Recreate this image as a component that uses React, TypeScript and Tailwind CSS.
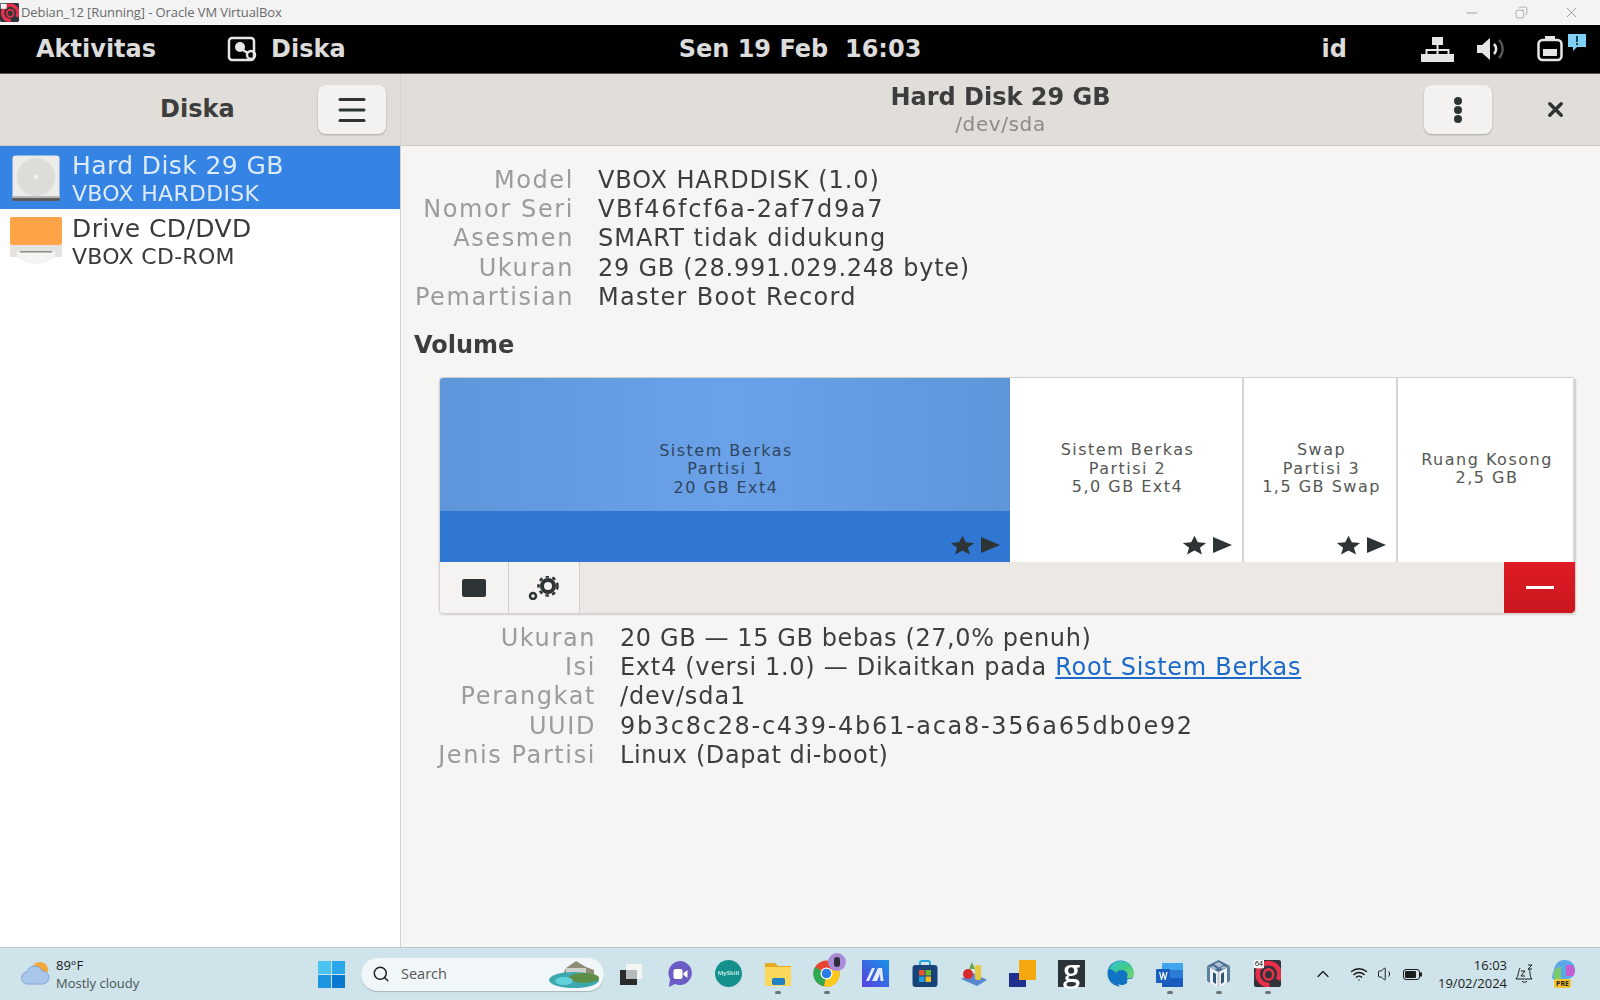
import { Search, ChevronUp, Wifi, Volume1, Minus, X, Copy, Menu } from "lucide-react";

const gnome = { fontFamily: '"DejaVu Sans", sans-serif' };
const win = { fontFamily: '"Open Sans", sans-serif' };

const Debian = ({ size = 26 }: { size?: number }) => (
  <svg width={size} height={size} viewBox="0 0 26 26">
    <rect width="26" height="26" rx="2" fill="#30343a" />
    <path d="M23 19a10.500 10.500 0 1 0-8 5" fill="none" stroke="#e8304a" strokeWidth="4.500" />
    <ellipse cx="14" cy="14" rx="4.500" ry="5" fill="none" stroke="#e8304a" strokeWidth="2.500" />
    <rect x="1" y="1" width="8" height="7" fill="#f3f3f3" />
  </svg>
);

const StarPlay = () => (
  <div className="absolute right-[10px] bottom-[7px] flex items-center gap-[6px]">
    <svg width="25" height="20" viewBox="0 0 24 18">
      <path d="M12 0l3.2 6.4 8 .6-6 4.6 2 6.4-7.2-3.8L4.800 18l2-6.400-6-4.600 8-.6z" fill="#2e3436" />
    </svg>
    <svg width="19" height="16" viewBox="0 0 19 16">
      <path d="M0 0l19 8L0 16z" fill="#2e3436" />
    </svg>
  </div>
);

const Partition = ({ w, lines, icons = true }: { w: string; lines: string[]; icons?: boolean }) => (
  <div className={`${w} relative flex items-center justify-center border-r-2 border-[#d8d5d2] bg-white pb-[2px] pl-[3px] text-center text-[16px] leading-[18.400px] tracking-[1.500px] whitespace-nowrap text-[#555753]`}>
    <div>
      {lines.map((l) => (
        <div key={l}>{l}</div>
      ))}
    </div>
    {icons && <StarPlay />}
  </div>
);

const Info = ({ rows, cols }: { rows: [string, React.ReactNode, string][]; cols: string }) => (
  <div className={`grid ${cols} gap-x-[24px] text-[24px] leading-[29.200px]`}>
    {rows.map(([k, v, track]) => (
      <div key={k} className="contents">
        <div className="text-right tracking-[1.600px] whitespace-nowrap text-[#9b9b98]">{k}</div>
        <div className={`whitespace-nowrap text-[#3d3d3a] ${track}`}>{v}</div>
      </div>
    ))}
  </div>
);

const TaskIcon = ({ dot, children }: { dot?: boolean; children: React.ReactNode }) => (
  <div className="relative flex h-full w-[49px] items-center justify-center pb-[1px]">
    {children}
    {dot && <div className="absolute bottom-[6px] h-[3px] w-[6px] rounded-full bg-[#6b7578]" />}
  </div>
);

const taskIcons = [
  <svg width="26" height="26" viewBox="0 0 26 26" key="tv">
    <rect x="2" y="9" width="17" height="15" fill="#2a2a2a" />
    <rect x="8" y="3" width="16" height="15" fill="#f4f6f6" />
    <rect x="8" y="9" width="11" height="9" fill="#b4b9ba" />
  </svg>,
  <svg width="26" height="30" viewBox="0 0 26 30" key="meet">
    <path d="M13 2a12 12 0 1 1-5 23l-6 3 1-8A12 12 0 0 1 13 2z" fill="#6a5cc4" />
    <rect x="6.500" y="10" width="9" height="10" rx="2" fill="#fff" />
    <path d="M16.500 14l4-3v8l-4-3z" fill="#fff" />
  </svg>,
  <div className="flex h-[27px] w-[27px] items-center justify-center rounded-full bg-[#15908c] text-[6px] font-bold text-[#bfe8e2]" key="ms">
    MySkill
  </div>,
  <svg width="28" height="26" viewBox="0 0 28 26" key="files">
    <path d="M1 2h10l3 3h13v19H1z" fill="#e6a91f" />
    <rect x="1" y="6" width="26" height="19" rx="1" fill="#fbd75c" />
    <rect x="8" y="17" width="13" height="7" rx="1.500" fill="#1f80c4" />
  </svg>,
  <div className="relative" key="chrome">
    <svg width="27" height="27" viewBox="0 0 27 27">
      <circle cx="13.500" cy="13.500" r="13" fill="#e5452f" />
      <path d="M13.500 13.500L2 7a13 13 0 0 0 9 19.300z" fill="#2fa84f" />
      <path d="M13.500 13.500l-2.500 13A13 13 0 0 0 26 9.500H13.500z" fill="#fbc91c" />
      <circle cx="13.500" cy="13.500" r="6" fill="#fff" />
      <circle cx="13.500" cy="13.500" r="4.800" fill="#2c7be5" />
    </svg>
    <div className="absolute -top-[7px] -right-[6px] flex h-[18px] w-[18px] items-center justify-center rounded-full bg-[#a98bd8]">
      <div className="h-[10px] w-[6px] rounded-sm bg-[#2e2e38]" />
    </div>
  </div>,
  <svg width="27" height="27" viewBox="0 0 27 27" key="m">
    <defs>
      <linearGradient id="mg" x1="0" y1="1" x2="1" y2="0">
        <stop offset="0" stopColor="#5b3fe0" />
        <stop offset="1" stopColor="#1593e6" />
      </linearGradient>
    </defs>
    <rect width="27" height="27" fill="url(#mg)" />
    <path d="M4 21l6-13h3L7 21zM10 21l6-13h4l1.500 13h-3l-.5-7-3 7z" fill="#e6ecfb" />
  </svg>,
  <svg width="26" height="28" viewBox="0 0 26 28" key="store">
    <path d="M8 6V3a2 2 0 0 1 2-2h6a2 2 0 0 1 2 2v3" fill="none" stroke="#29a5dd" strokeWidth="2" />
    <rect x="0.500" y="5" width="25" height="22" rx="3" fill="#16447a" />
    <rect x="7" y="10" width="5.500" height="5.500" fill="#e9542e" />
    <rect x="13.500" y="10" width="5.500" height="5.500" fill="#72b82e" />
    <rect x="7" y="16.500" width="5.500" height="5.500" fill="#1ea0e0" />
    <rect x="13.500" y="16.500" width="5.500" height="5.500" fill="#f8bc1c" />
  </svg>,
  <svg width="28" height="26" viewBox="0 0 28 26" key="geo">
    <path d="M1 18l12-6 14 7-10 6z" fill="#5a88cf" />
    <circle cx="8" cy="13" r="5" fill="#d92b2b" />
    <rect x="15" y="4" width="6" height="15" rx="2" fill="#e8c93c" />
    <path d="M9 8l3-7 3 7z" fill="#66a84a" />
  </svg>,
  <svg width="27" height="27" viewBox="0 0 27 27" key="sq">
    <rect x="0" y="13" width="17" height="14" fill="#20308f" />
    <rect x="10" y="0" width="17" height="20" fill="#f7a70f" />
  </svg>,
  <div className="flex h-[27px] w-[27px] items-center justify-center bg-[#2b3338] pb-[7px] text-[31px] leading-none font-semibold text-white" key="g" style={win}>
    g
  </div>,
  <svg width="27" height="27" viewBox="0 0 27 27" key="edge">
    <defs>
      <linearGradient id="eg" x1="0" y1="0" x2="1" y2="1">
        <stop offset="0" stopColor="#37c5cf" />
        <stop offset="0.500" stopColor="#3ec98f" />
        <stop offset="1" stopColor="#7fdc6a" />
      </linearGradient>
    </defs>
    <circle cx="13.500" cy="13.500" r="13" fill="#1272c4" />
    <path d="M2 9a13 13 0 0 1 25 5c0 4-4 5-8 4 2-1 2-3 1-5-2-4-9-4-11 0-2-3-5-4-7-4z" fill="url(#eg)" />
    <path d="M27 17c-1 6-6 10-11 10-3 0-4-1-5-3 3 2 7 1 9-1 1-1-1-3 1-4 2 0 4 0 6-2z" fill="#cfe3ea" />
  </svg>,
  <svg width="27" height="26" viewBox="0 0 27 26" key="word">
    <rect x="6" y="2" width="21" height="24" rx="1.500" fill="#2b7cd3" />
    <rect x="6" y="2" width="21" height="7" fill="#41a5ee" />
    <rect x="6" y="17" width="21" height="9" fill="#185abd" />
    <rect x="0" y="8" width="14" height="14" rx="1" fill="#1a5fc0" />
    <path d="M3 11l2 8h1l1.300-5 1.300 5h1l2-8h-1.300l-1.200 5.500L7.800 11H6.800l-1.300 5.500L4.300 11z" fill="#fff" />
  </svg>,
  <svg width="25" height="30" viewBox="0 0 25 30" key="vbox">
    <path d="M12.500 1L24 7v15l-11.500 7L1 22V7z" fill="#eef2f4" />
    <path d="M12.500 1L24 7l-11.500 6L1 7z" fill="#4b6f90" />
    <path d="M8 5l4.500-2 5 3-4.500 2.500zM4 8l3-1 4 2.500-3 1.500zM14 9l4-2 3 1-4 2z" fill="#a9c0d2" />
    <path d="M1 7v15l3 2V9zM24 7v15l-3 2V9z" fill="#5b7f9f" />
    <path d="M7 13l3 2v10l-3-2zM18 13l-3 2v10l3-2z" fill="#2f5678" />
    <path d="M11.500 13h2v15h-2z" fill="#bcc9d2" />
  </svg>,
  <div className="relative" key="deb">
    <Debian size={27} />
    <div className="absolute top-0 left-0 bg-[#f3f3f3] px-[1px] text-[7px] leading-[8px] text-black">64</div>
  </div>,
];

export default function App() {
  return (
    <div className="flex h-[1000px] w-[1600px] flex-col overflow-hidden bg-white">
      {/* host window title */}
      <div className="flex h-[25px] shrink-0 items-center bg-[#f3f3f3] text-[13px] tracking-[-0.100px] text-[#6a6a6a]" style={win}>
        <Debian size={19} />
        <span className="ml-[2px]">Debian_12 [Running] - Oracle VM VirtualBox</span>
        <div className="ml-auto flex items-center gap-[35px] pr-[20px] text-[#777]">
          <Minus size={16} strokeWidth={1} />
          <Copy size={13} strokeWidth={1} className="-scale-x-100" />
          <X size={17} strokeWidth={1} />
        </div>
      </div>

      <div className="flex min-h-0 flex-1 flex-col blur-[0.5px]" style={gnome}>
        {/* gnome top bar */}
        <div className="grid h-[49px] shrink-0 grid-cols-[1fr_auto_1fr] items-center border-b border-[#55534f] bg-black text-[24px] font-bold text-[#dcdcdc]">
          <div className="flex items-center pl-[36px]">
            <span>Aktivitas</span>
            <svg width="33" height="26" viewBox="0 0 33 26" className="ml-[71px] mr-[11px]">
              <rect x="2" y="2" width="25" height="22" rx="3" fill="none" stroke="#e6e6e6" strokeWidth="2.500" />
              <circle cx="13" cy="11" r="5" fill="#e6e6e6" />
              <circle cx="24" cy="19" r="4" fill="none" stroke="#e6e6e6" strokeWidth="2.500" />
              <path d="M14 13l7 4" stroke="#e6e6e6" strokeWidth="2.500" />
            </svg>
            <span>Diska</span>
          </div>
          <div className="whitespace-nowrap">Sen 19 Feb&nbsp;&nbsp;16:03</div>
          <div className="flex items-center justify-end pr-[14px]">
            <span>id</span>
            <svg width="33" height="25" viewBox="0 0 33 25" className="ml-[74px]" fill="#e6e6e6">
              <rect x="11" y="0" width="11" height="8" />
              <rect x="0" y="17" width="11" height="8" />
              <rect x="11" y="17" width="11" height="8" />
              <rect x="22" y="17" width="11" height="8" />
              <path d="M15.500 8h2v4h11v5h-2v-3h-9v3h-2v-3h-9v3h-2v-5h11z" />
            </svg>
            <svg width="33" height="24" viewBox="0 0 33 24" className="ml-[23px]">
              <path d="M0 8h5l8-7v22l-8-7H0z" fill="#e6e6e6" />
              <path d="M17 7a7 7 0 0 1 0 10" fill="none" stroke="#e6e6e6" strokeWidth="2.500" />
              <path d="M22 3a13 13 0 0 1 0 18" fill="none" stroke="#555" strokeWidth="2.500" />
            </svg>
            <svg width="26" height="26" viewBox="0 0 26 26" className="ml-[27px]">
              <rect x="8" y="0" width="10" height="4" fill="#e6e6e6" />
              <rect x="1.500" y="4" width="23" height="20" rx="4" fill="none" stroke="#e6e6e6" strokeWidth="2.500" />
              <rect x="6" y="13" width="14" height="7" fill="#e6e6e6" />
            </svg>
            <svg width="18" height="18" viewBox="0 0 18 18" className="mb-[12px] ml-[5px]">
              <path d="M0 0h18v13h-9l-4 4v-4H0z" fill="#7fd0f5" />
              <rect x="8" y="2" width="2" height="6" fill="#16445a" />
              <rect x="8" y="9" width="2" height="2" fill="#16445a" />
            </svg>
          </div>
        </div>

        <div className="flex min-h-0 flex-1">
          {/* sidebar */}
          <div className="flex w-[401px] shrink-0 flex-col border-r border-[#d5d2ce]">
            <div className="flex h-[72px] shrink-0 items-center justify-between border-b border-[#cdc9c4] bg-[#e1ded9] pr-[14px] pl-[160px]">
              <span className="-mt-[1px] text-[24px] font-bold text-[#3d3d3d]">Diska</span>
              <button className="flex h-[49px] w-[68px] items-center justify-center rounded-lg bg-[#f3f2f0] shadow-[0_1px_2px_rgba(0,0,0,0.25)]">
                <Menu size={36} strokeWidth={2} className="text-[#2e3436]" />
              </button>
            </div>
            <div className="flex h-[63px] items-center bg-[#3584e4] pl-[12px] text-[#dbeafc]">
              <svg width="48" height="46" viewBox="0 0 48 46">
                <rect x="0.500" y="0.500" width="47" height="45" rx="3" fill="#ecebe7" />
                <rect x="0" y="41" width="48" height="5" rx="2" fill="#5a5a58" />
                <rect x="0" y="41" width="48" height="2" fill="#b8b7b3" />
                <circle cx="24" cy="22" r="19" fill="#dddcd8" />
                <circle cx="24" cy="22" r="2" fill="#f2f2f0" />
              </svg>
              <div className="ml-[12px] whitespace-nowrap">
                <div className="text-[25px] leading-[31px] tracking-[0.400px]">Hard Disk 29 GB</div>
                <div className="text-[22px] leading-[25px] tracking-[0.300px]">VBOX HARDDISK</div>
              </div>
            </div>
            <div className="flex h-[63px] items-center pl-[10px] text-[#3a3a3a]">
              <svg width="52" height="48" viewBox="0 0 52 48">
                <rect x="0" y="0" width="52" height="28" rx="2" fill="#ffa348" />
                <rect x="0" y="28" width="52" height="12" fill="#e4e3e0" />
                <path d="M6 35h40c-2 8-8 12-20 12S8 43 6 35z" fill="#f4f4f2" />
                <rect x="10" y="34" width="32" height="1.500" fill="#8c8c8a" />
              </svg>
              <div className="ml-[10px] whitespace-nowrap">
                <div className="text-[25px] leading-[31px] tracking-[0.400px]">Drive CD/DVD</div>
                <div className="text-[22px] leading-[25px] tracking-[0.300px]">VBOX CD-ROM</div>
              </div>
            </div>
          </div>

          {/* main pane */}
          <div className="flex min-w-0 flex-1 flex-col bg-[#f6f5f4]">
            <div className="grid h-[72px] shrink-0 grid-cols-[1fr_auto_1fr] items-center border-b border-[#cdc9c4] bg-[#e1ded9]">
              <div />
              <div className="-mt-[2px] text-center">
                <div className="text-[24px] leading-[32px] font-bold text-[#3d3d3d]">Hard Disk 29 GB</div>
                <div className="text-[20px] leading-[23px] tracking-[0.600px] text-[#8c8a88]">/dev/sda</div>
              </div>
              <div className="flex items-center justify-end pr-[33px]">
                <button className="mr-[1px] flex h-[49px] w-[68px] items-center justify-center rounded-lg bg-[#f3f2f0] shadow-[0_1px_2px_rgba(0,0,0,0.25)]">
                  <svg width="8" height="26" viewBox="0 0 8 26" fill="#2e3436">
                    <circle cx="4" cy="4" r="4" />
                    <circle cx="4" cy="13" r="4" />
                    <circle cx="4" cy="22" r="4" />
                  </svg>
                </button>
                <X size={23} strokeWidth={3.600} className="ml-[51px] text-[#2e3436]" />
              </div>
            </div>

            <div className="pt-[20px]">
              <Info
                cols="grid-cols-[173px_1fr]"
                rows={[
                  ["Model", "VBOX HARDDISK (1.0)", "tracking-[0.900px]"],
                  ["Nomor Seri", "VBf46fcf6a-2af7d9a7", "tracking-[1.650px]"],
                  ["Asesmen", "SMART tidak didukung", "tracking-[1px]"],
                  ["Ukuran", "29 GB (28.991.029.248 byte)", "tracking-[0.750px]"],
                  ["Pemartisian", "Master Boot Record", "tracking-[1.300px]"],
                ]}
              />
              <div className="mt-[17px] pl-[13px] text-[24px] leading-[33px] font-bold text-[#3d3d3d]">Volume</div>

              <div className="mt-[15px] mr-[24px] ml-[38px] overflow-hidden rounded-[4px] border border-[#d3d0cc] shadow-[0_1px_2px_rgba(0,0,0,0.15)]">
                <div className="flex h-[184px]">
                  <div className="relative flex w-[570px] flex-col text-center text-[16px] leading-[18.400px] tracking-[1.500px] whitespace-nowrap text-[#2f4660]">
                    <div className="flex h-[133px] items-center justify-center bg-[linear-gradient(90deg,#5f95d9,#6aa1e8_50%,#5f95d9)] pt-[50px] pl-[2px]">
                      <div>
                        <div>Sistem Berkas</div>
                        <div>Partisi 1</div>
                        <div>20 GB Ext4</div>
                      </div>
                    </div>
                    <div className="flex-1 bg-[#2f77d3]" />
                    <StarPlay />
                  </div>
                  <Partition w="w-[234px]" lines={["Sistem Berkas", "Partisi 2", "5,0 GB Ext4"]} />
                  <Partition w="w-[154px]" lines={["Swap", "Partisi 3", "1,5 GB Swap"]} />
                  <Partition w="flex-1 border-r-0" lines={["Ruang Kosong", "2,5 GB"]} icons={false} />
                </div>
                <div className="flex h-[51px] items-stretch bg-[#ebe8e5]">
                  <div className="flex w-[69px] items-center justify-center border-r border-[#d3d0cc] bg-[#f4f3f1]">
                    <div className="h-[18px] w-[24px] rounded-[2px] bg-[#2e3436]" />
                  </div>
                  <div className="flex w-[71px] items-center justify-center border-r border-[#d3d0cc] bg-[#f4f3f1]">
                    <svg width="32" height="24" viewBox="0 0 32 24" fill="none">
                      <circle cx="20" cy="10" r="6" stroke="#2e3436" strokeWidth="4" />
                      <circle cx="20" cy="10" r="9.500" stroke="#2e3436" strokeWidth="2.500" strokeDasharray="3.500 3.500" />
                      <circle cx="5" cy="20" r="3" stroke="#2e3436" strokeWidth="2.500" />
                    </svg>
                  </div>
                  <div className="ml-auto flex w-[71px] items-center justify-center rounded-br-[4px] bg-[linear-gradient(#e01b24,#c8161f)]">
                    <div className="h-[3px] w-[28px] bg-white" />
                  </div>
                </div>
              </div>

              <div className="mt-[10px]">
                <Info
                  cols="grid-cols-[195px_1fr]"
                  rows={[
                    ["Ukuran", "20 GB — 15 GB bebas (27,0% penuh)", "tracking-[0.600px]"],
                    [
                      "Isi",
                      <>
                        Ext4 (versi 1.0) — Dikaitkan pada <span className="text-[#1b6acb] underline">Root Sistem Berkas</span>
                      </>,
                      "tracking-[0.700px]",
                    ],
                    ["Perangkat", "/dev/sda1", "tracking-[0.900px]"],
                    ["UUID", "9b3c8c28-c439-4b61-aca8-356a65db0e92", "tracking-[1.700px]"],
                    ["Jenis Partisi", "Linux (Dapat di-boot)", "tracking-[0.600px]"],
                  ]}
                />
              </div>
            </div>
          </div>
        </div>
      </div>

      {/* windows taskbar */}
      <div className="flex h-[53px] shrink-0 items-center border-t border-[#bcc8cc] bg-[#cfe3ea]" style={win}>
        <div className="flex h-full w-[307px] items-center pl-[20px]">
          <svg width="30" height="32" viewBox="0 0 30 32">
            <circle cx="20" cy="12" r="8" fill="#f5a83a" />
            <path d="M8 26a6 6 0 0 1-1-12 8 8 0 0 1 15-1 6.500 6.500 0 0 1 1 13z" fill="#a9c7ea" stroke="#7ea6d6" />
          </svg>
          <div className="ml-[6px] text-[13px] leading-[18px]">
            <div className="text-[#1c1c1c]">89°F</div>
            <div className="text-[#4b5356]">Mostly cloudy</div>
          </div>
        </div>
        <div className="flex w-[49px] justify-center">
          <svg width="27" height="27" viewBox="0 0 27 27">
            <rect width="13" height="13" fill="#4cc2f1" />
            <rect x="14" width="13" height="13" fill="#2ba6ea" />
            <rect y="14" width="13" height="13" fill="#1d96e2" />
            <rect x="14" y="14" width="13" height="13" fill="#0a78d0" />
          </svg>
        </div>
        <div className="relative ml-[5px] flex h-[33px] w-[243px] items-center rounded-full bg-[#f1f6f8] pl-[11px] text-[14.500px] text-[#555] shadow-[0_1px_1px_rgba(0,0,0,0.2)]">
          <Search size={18} strokeWidth={2} className="text-[#222]" />
          <span className="ml-[11px]">Search</span>
          <svg width="56" height="30" viewBox="0 0 56 30" className="absolute top-[2px] right-0">
            <path d="M18 8l10-7 10 6 8 3v10H12z" fill="#8f8c78" />
            <rect x="18" y="8" width="20" height="9" fill="#cfd2cc" />
            <ellipse cx="26" cy="20" rx="25" ry="8" fill="#3ca9b0" />
            <ellipse cx="36" cy="18" rx="15" ry="5" fill="#5f8f46" />
            <ellipse cx="16" cy="21" rx="9" ry="4" fill="#62d2dc" />
          </svg>
        </div>
        <div className="ml-[2px] flex h-full">
          {taskIcons.map((icon, i) => (
            <TaskIcon key={i} dot={[3, 4, 11, 12, 13].includes(i)}>
              {icon}
            </TaskIcon>
          ))}
        </div>
        <div className="flex h-full flex-1 items-center text-[#1c1c1c]">
          <ChevronUp size={20} strokeWidth={1.600} className="ml-[21px]" />
          <Wifi size={18} strokeWidth={1.800} className="ml-[17px]" />
          <Volume1 size={18} strokeWidth={1.300} className="ml-[9px]" />
          <svg width="19" height="11" viewBox="0 0 19 11" className="ml-[8px]">
            <rect x="0.500" y="0.500" width="16" height="10" rx="2.500" fill="none" stroke="#1c1c1c" />
            <rect x="2" y="2" width="11" height="7" rx="1" fill="#1c1c1c" />
            <rect x="17" y="3.500" width="2" height="4" fill="#1c1c1c" />
          </svg>
          <div className="ml-[16px] text-right text-[13px] leading-[18px]">
            <div>16:03</div>
            <div>19/02/2024</div>
          </div>
          <svg width="20" height="21" viewBox="0 0 20 21" className="ml-[8px]" fill="none" stroke="#1c1c1c" strokeWidth="1">
            <path d="M5 4c-2 3-1 8-4 11h16c-3-3-1-6-3-10" />
            <path d="M7 17a3 3 0 0 0 5 0" />
            <path d="M6 7h4l-4 5h4M13 1h4l-4 4h4" />
          </svg>
          <div className="relative ml-[16px] h-[30px] w-[26px]">
            <svg width="26" height="24" viewBox="0 0 26 24">
              <path d="M13 1c-5 0-9 4-10 9l-2 8c0 3 4 4 6 2h8c6 0 9-4 9-9s-3-10-11-10z" fill="#5aa8e8" />
              <path d="M3 14c0-4 3-6 7-6v14H6c-3 0-4-4-3-8z" fill="#7cc96b" />
              <path d="M15 6h6c3 2 4 8 1 11h-7z" fill="#c65ed0" />
            </svg>
            <div className="absolute bottom-[1px] left-[3px] rounded-[2px] bg-[#f6c32e] px-[2px] text-[7px] leading-[9px] font-bold text-[#222]">PRE</div>
          </div>
        </div>
      </div>
    </div>
  );
}
